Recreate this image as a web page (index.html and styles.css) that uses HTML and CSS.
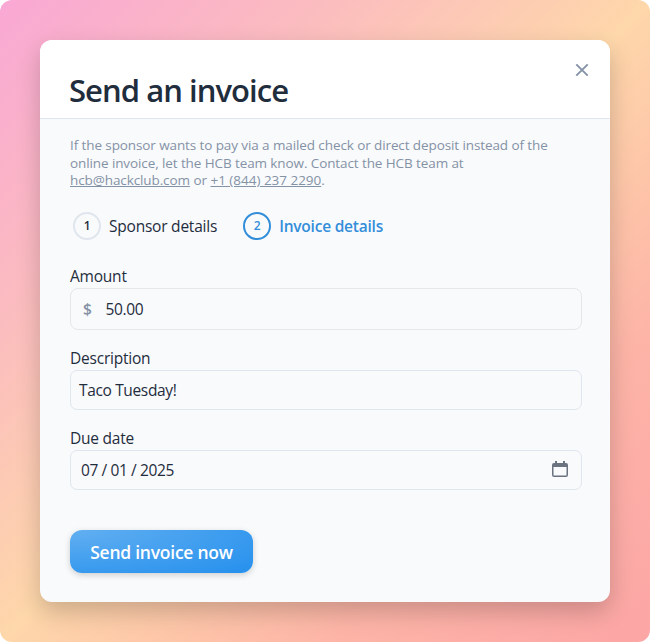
FILE: index.html
```html
<!DOCTYPE html>
<html lang="en">
<head>
<meta charset="utf-8">
<title>Send an invoice</title>
<link rel="stylesheet" href="styles.css">
</head>
<body>
<div class="backdrop">
<main class="modal">
  <header class="modal-header">
    <h1>Send an invoice</h1>
    <button class="close" aria-label="Close"><svg width="14" height="14" viewBox="0 0 14 14"><path d="M1.3 1.3l11.4 11.4M12.7 1.3L1.3 12.7" fill="none" stroke="currentColor" stroke-width="1.9"/></svg></button>
  </header>
  <div class="modal-body">
    <p class="note">If the sponsor wants to pay via a mailed check or direct deposit instead of the<br>online invoice, let the HCB team know. Contact the HCB team at<br><span class="contact"><a>hcb@hackclub.com</a> or <a>+1 (844) 237 2290</a>.</span></p>
    <nav class="steps">
      <div class="step"><span class="num">1</span><span>Sponsor details</span></div>
      <div class="step active"><span class="num">2</span><span>Invoice details</span></div>
    </nav>
    <form>
      <label>Amount</label>
      <div class="input amount"><span class="currency">$</span><span>50.00</span></div>
      <label>Description</label>
      <div class="input">Taco Tuesday!</div>
      <label>Due date</label>
      <div class="input date"><span>07 / 01 / 2025</span>
        <svg width="16" height="16" viewBox="0 0 16 16"><path d="M3 0h2v2h6V0h2v2h1a2 2 0 0 1 2 2v10a2 2 0 0 1-2 2H2a2 2 0 0 1-2-2V4a2 2 0 0 1 2-2h1zM1.5 6v8q0 .5.5.5h12q.5 0 .5-.5V6z" fill="currentColor" fill-rule="evenodd"/></svg>
      </div>
      <button type="button" class="submit">Send invoice now</button>
    </form>
  </div>
</main>
</div>
</body>
</html>
```
FILE: styles.css
```css
* { box-sizing: border-box; }
body { margin: 0; background: #fff; font-family: "Open Sans", "Noto Sans", sans-serif; font-size: 15.5px; letter-spacing: -0.22px; color: #1f2d3d; }
.backdrop { width: 650px; height: 642px; padding: 40px; border-radius: 12px; background: linear-gradient(to bottom right, #f9a8d4, #fbbcbf 25%, #fed7aa 50%, #fdb5a7 75%, #fca5a5); }
.modal { height: 562px; border-radius: 12px; background: #f9fafc; overflow: hidden; box-shadow: 0 10px 24px rgba(0,0,0,.2); }
.modal-header { height: 79px; padding: 30px 20px 0 29px; display: flex; justify-content: space-between; background: #fff; border-bottom: 1px solid #e0e6ed; }
h1 { margin: 0; font-size: 31px; line-height: 40px; font-weight: 600; letter-spacing: -0.95px; white-space: nowrap; }
.close { border: 0; background: none; padding: 0; height: 14px; margin: -7px 1px 0 0; color: #8492a6; }
.modal-body { padding: 18px 28px 0 30px; }
.note { margin: 0; font-size: 13.5px; line-height: 17.5px; letter-spacing: -0.1px; color: #8492a6; white-space: nowrap; }
.contact { letter-spacing: -0.02px; }
.contact a:first-child { letter-spacing: -0.1px; }
.note a { text-decoration: underline; }
.steps { display: flex; gap: 26px; height: 28px; margin: 22px 0 0 3px; }
.step { display: flex; align-items: center; gap: 8px; }
.num { width: 28px; height: 28px; border: 2px solid #e0e6ed; border-radius: 50%; display: grid; place-items: center; font-size: 12px; font-weight: 600; }
.active { color: #338eda; font-weight: 600; }
.active .num { border-color: #338eda; }
form { margin-top: 26px; }
label { display: block; height: 22px; line-height: 21px; }
.input { height: 40px; border: 1px solid #e0e6ed; border-radius: 7px; padding: 0 8px; display: flex; align-items: center; margin-bottom: 18px; letter-spacing: -0.35px; }
.amount { height: 42px; padding-left: 12px; gap: 14px; border-color: #e5e7eb; border-radius: 8px; }
.currency { color: #8492a6; font-weight: 600; }
.date { justify-content: space-between; padding: 0 13px 0 10px; word-spacing: -0.1px; }
.date svg { color: #6b7280; margin-top: -1px; }
.submit { display: block; margin-top: 40px; width: 183px; height: 43px; padding: 2px 0 0; border: 0; border-radius: 12px; color: #fff; font: 600 17.5px "Open Sans", sans-serif; letter-spacing: -0.25px; background: radial-gradient(ellipse farthest-corner at top left, #62aff1, #2590ed); box-shadow: 0 2px 6px rgba(0,0,0,.18); white-space: nowrap; }
```
